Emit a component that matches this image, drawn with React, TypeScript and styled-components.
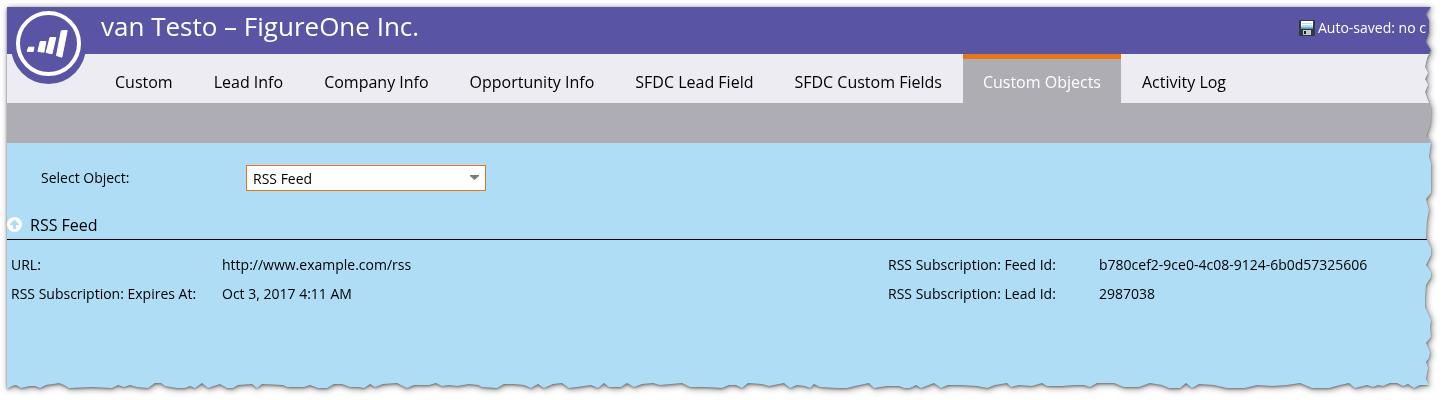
import React from 'react';
import styled, { createGlobalStyle } from 'styled-components';

const GlobalStyle = createGlobalStyle`
  * { box-sizing: border-box; }
  body {
    margin: 0;
    background: #fff;
    color: #000;
    font-family: 'Open Sans', 'Noto Sans', sans-serif;
    font-size: 14px;
    line-height: 20px;
  }
`;

/* [distance from the right side, distance from the top] */
const rightTear: [number, number][] = [
  [0, 0], [5, 7], [2, 13], [2, 26], [5, 35], [0, 43], [4, 51], [6, 60], [3, 66], [6, 72],
  [3, 78], [6, 85], [4, 91], [0, 101], [1, 118], [5, 129], [0, 136], [2, 150], [0, 156],
  [0, 186], [5, 192], [2, 203], [4, 213], [5, 231], [0, 241], [0, 248], [5, 258], [0, 265],
  [0, 270], [5, 278], [6, 290], [6, 300], [0, 313], [1, 320], [0, 330], [5, 336], [1, 345],
  [2, 351], [5, 355], [3, 361], [5, 372],
];

/* [distance from the left side, distance from the bottom] */
const bottomTear: [number, number][] = [
  [0, 0], [5, 3], [9, 4], [14, 1], [23, 3], [28, 3], [33, 1], [39, 4], [46, 5], [52, 6], [57, 4],
  [62, 1], [85, 2], [105, 1], [111, 4], [117, 2], [123, 4], [130, 2], [141, 1], [148, 6], [154, 6],
  [158, 3], [170, 1], [178, 1], [183, 3], [188, 1], [195, 6], [201, 1], [213, 5], [220, 1],
  [226, 1], [231, 4], [245, 5], [250, 1], [255, 5], [276, 4], [280, 2], [297, 2], [303, 4],
  [311, 1], [320, 1], [327, 5], [335, 5], [343, 2], [351, 2], [357, 1], [363, 5], [368, 2],
  [376, 5], [390, 6], [400, 1], [407, 4], [422, 4], [429, 6], [435, 3], [442, 4], [450, 3],
  [462, 5], [471, 4], [475, 2], [490, 1], [497, 5], [507, 5], [517, 4], [524, 1], [531, 5],
  [537, 1], [546, 5], [555, 6], [562, 1], [570, 2], [584, 4], [591, 1], [597, 6], [602, 2],
  [614, 2], [620, 6], [627, 2], [635, 5], [646, 6], [653, 4], [675, 6], [683, 2], [700, 2],
  [715, 1], [722, 4], [729, 4], [735, 1], [741, 6], [755, 5], [762, 3], [777, 6], [783, 1],
  [790, 4], [798, 3], [803, 1], [807, 5], [813, 2], [830, 1], [840, 1], [848, 3], [862, 6],
  [867, 1], [880, 3], [892, 3], [897, 1], [903, 1], [909, 4], [914, 1], [927, 6], [934, 1],
  [941, 4], [953, 4], [970, 3], [980, 1], [988, 4], [1000, 6], [1004, 2], [1012, 4],
  [1025, 3], [1035, 6], [1040, 3], [1055, 3], [1068, 4], [1077, 4], [1083, 2], [1090, 6],
  [1107, 6], [1117, 2], [1132, 2], [1143, 6], [1155, 4], [1162, 1], [1173, 1], [1179, 6],
  [1185, 1], [1192, 5], [1207, 4], [1220, 1], [1238, 1], [1250, 4], [1265, 3], [1280, 4],
  [1293, 6], [1305, 1], [1322, 1], [1333, 4], [1342, 6], [1348, 1], [1360, 4], [1366, 2],
  [1371, 4], [1376, 3], [1383, 6], [1390, 6], [1396, 3], [1401, 5], [1407, 1], [1413, 4],
];

const tornOutline = [
  '0 0',
  ...rightTear.map(([x, y]) => `calc(100% - ${x}px) ${y}px`),
  'calc(100% - 2px) calc(100% - 4px)',
  ...[...bottomTear].reverse().map(([x, y]) => `min(${x}px, calc(100% - 8px)) calc(100% - ${y}px)`),
].join(', ');

const PaperShadow = styled.div`
  display: flex;
  min-height: 100vh;
  padding: 7px 12px 11px 7px;
  filter: drop-shadow(0 1px 1px rgba(0, 0, 0, 0.35)) drop-shadow(1px 1px 3px rgba(0, 0, 0, 0.5));
`;

const Paper = styled.div`
  flex: 1;
  min-width: 0;
  display: flex;
  flex-direction: column;
  background: #b0ddf6;
  clip-path: polygon(${tornOutline});
`;

const Header = styled.header`
  position: relative;
  display: flex;
  justify-content: space-between;
  height: 47px;
  padding-left: 94px;
  background: #5a54a4;
  color: #fff;
  white-space: nowrap;
`;

const Logo = styled.svg`
  position: absolute;
  left: 4px;
  top: 2px;
  width: 76px;
  height: 76px;
`;

const Title = styled.h1`
  margin: 0;
  font-size: 26px;
  line-height: 38px;
  font-weight: 400;
`;

const SaveStatus = styled.div`
  display: flex;
  align-items: center;
  gap: 3px;
  width: 132px;
  height: 41px;
  flex: none;

  svg { flex: none; }
`;

const Tabs = styled.nav`
  display: flex;
  gap: 1px;
  height: 49px;
  padding-left: 88px;
  background: #edecf2;
`;

const Tab = styled.a<{ $active?: boolean }>`
  padding: 13px 20px 0;
  border-top: ${(p) => (p.$active ? '5px solid #e87619' : '5px solid transparent')};
  background: ${(p) => (p.$active ? '#aeadb3' : 'transparent')};
  color: ${(p) => (p.$active ? '#fff' : '#000')};
  font-size: 16px;
  line-height: 20px;
  text-decoration: none;
  white-space: nowrap;
`;

const SubBar = styled.div`
  height: 40px;
  background: #aeadb3;
`;

const Picker = styled.div`
  display: flex;
  align-items: center;
  padding: 22px 0 0 34px;

  label { width: 205px; }
`;

const SelectBox = styled.div`
  position: relative;
  width: 240px;

  svg {
    position: absolute;
    right: 7px;
    top: 10px;
    pointer-events: none;
  }
`;

const Select = styled.select`
  display: block;
  appearance: none;
  width: 100%;
  height: 26px;
  padding: 2px 6px 0;
  border: 1px solid #e87619;
  border-radius: 0;
  background: #fff;
  color: #000;
  font: inherit;
`;

const SectionHeading = styled.div`
  display: flex;
  align-items: center;
  gap: 8px;
  height: 49px;
  padding-top: 19px;
  border-bottom: 1px solid #000;

  h2 {
    margin: 0;
    font-size: 16px;
    line-height: 20px;
    font-weight: 400;
  }
`;

const CollapseButton = styled.button`
  display: flex;
  padding: 0;
  border: 0;
  background: none;
`;

const Fields = styled.div`
  display: grid;
  grid-template-columns: 877fr 543fr;
  padding: 15px 0 0 4px;
`;

const FieldList = styled.dl`
  display: grid;
  grid-template-columns: 211px 1fr;
  row-gap: 9px;
  margin: 0;
  white-space: nowrap;

  dd { margin: 0; }
`;

const tabs = [
  'Custom', 'Lead Info', 'Company Info', 'Opportunity Info',
  'SFDC Lead Field', 'SFDC Custom Fields', 'Custom Objects', 'Activity Log',
];

const columns = [
  [
    ['URL:', 'http://www.example.com/rss'],
    ['RSS Subscription: Expires At:', 'Oct 3, 2017 4:11 AM'],
  ],
  [
    ['RSS Subscription: Feed Id:', 'b780cef2-9ce0-4c08-9124-6b0d57325606'],
    ['RSS Subscription: Lead Id:', '2987038'],
  ],
];

const FloppyIcon = () => (
  <svg width="16" height="16" viewBox="0 0 16 16" aria-hidden="true">
    <defs>
      <linearGradient id="floppy-label" x1="0" y1="0" x2="0" y2="1">
        <stop offset="0.5" stopColor="#fff" />
        <stop offset="0.75" stopColor="#8fcdee" />
        <stop offset="1" stopColor="#2f7fae" />
      </linearGradient>
    </defs>
    <rect width="16" height="16" rx="1" fill="#33383c" />
    <rect x="2" y="1" width="12" height="8" fill="url(#floppy-label)" />
    <path d="M3 3.5h10M3 5.5h10" stroke="#b4dff5" />
    <rect x="4" y="10" width="8" height="5" fill="#c9c9c9" />
    <rect x="5" y="11" width="2" height="3" fill="#1b1d1f" />
  </svg>
);

export default function App() {
  return (
    <>
      <GlobalStyle />
      <PaperShadow>
        <Paper>
          <Header>
            <Logo viewBox="0 0 76 76" aria-hidden="true">
              <circle cx="37.5" cy="37.5" r="37.5" fill="#5a54a4" />
              <circle cx="37.5" cy="34.5" r="30.5" fill="none" stroke="#fff" strokeWidth="4" />
              <path
                fill="#fff"
                stroke="#fff"
                strokeWidth="1"
                strokeLinejoin="round"
                d="M17.600 38.200h5.400l-.8 4.200h-6z
                M29.300 32.500h5.600l-2 10.700-6-.8z
                M39 28.500h5.800l-3.800 16.300-5.800-1.300z
                M50.300 21.800l5.900-.3-5.400 26.700-5.300-1.700z"
              />
            </Logo>
            <Title>van Testo – FigureOne Inc.</Title>
            <SaveStatus>
              <FloppyIcon />
              <span>Auto-saved: no c</span>
            </SaveStatus>
          </Header>
          <Tabs>
            {tabs.map((name) => (
              <Tab key={name} href="#" $active={name === 'Custom Objects'}>{name}</Tab>
            ))}
          </Tabs>
          <SubBar />
          <Picker>
            <label htmlFor="object">Select Object:</label>
            <SelectBox>
              <Select id="object" defaultValue="RSS Feed">
                <option>RSS Feed</option>
              </Select>
              <svg width="9" height="5" viewBox="0 0 9 5" aria-hidden="true">
                <path d="M0 0h9v1L4.500 5 0 1z" fill="#7b7b7b" />
              </svg>
            </SelectBox>
          </Picker>
          <SectionHeading>
            <CollapseButton aria-label="Collapse section">
              <svg width="15" height="15" viewBox="0 0 15 15" aria-hidden="true">
                <circle cx="7.500" cy="7.500" r="7.500" fill="#fff" />
                <path d="M7.500 2.500l4.500 4.500v1H9v4H6v-4H3v-1z" fill="#b0ddf6" />
              </svg>
            </CollapseButton>
            <h2>RSS Feed</h2>
          </SectionHeading>
          <Fields>
            {columns.map((fields, i) => (
              <FieldList key={i}>
                {fields.map(([label, value]) => (
                  <React.Fragment key={label}>
                    <dt>{label}</dt>
                    <dd>{value}</dd>
                  </React.Fragment>
                ))}
              </FieldList>
            ))}
          </Fields>
        </Paper>
      </PaperShadow>
    </>
  );
}
